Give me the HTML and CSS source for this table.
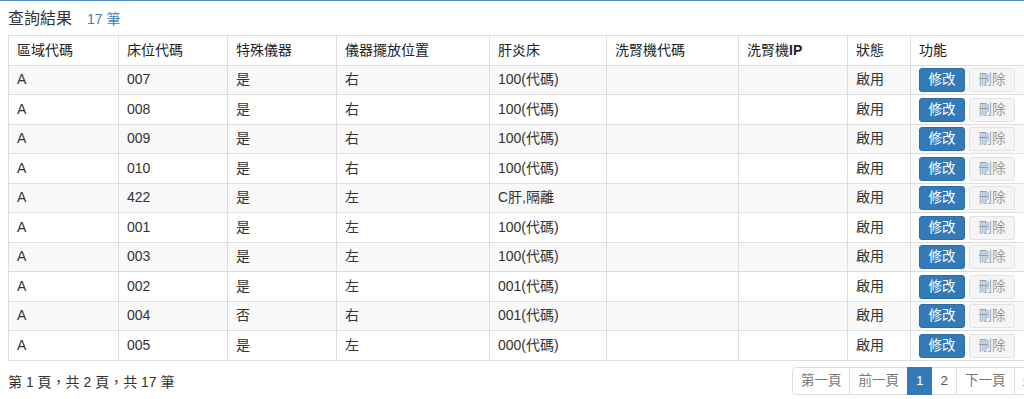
FILE: index.html
```html
<!DOCTYPE html>
<html lang="zh-Hant">
<head>
<meta charset="utf-8">
<link rel="stylesheet" href="styles.css">
</head>
<body>
<div class="page">
  <div class="title-bar">
    <span class="title">查詢結果</span><span class="count">17 筆</span>
  </div>
  <table class="grid">
    <colgroup>
      <col class="c1"><col class="c2"><col class="c3"><col class="c4"><col class="c5"><col class="c6"><col class="c7"><col class="c8"><col class="c9">
    </colgroup>
    <thead>
      <tr><th>區域代碼</th><th>床位代碼</th><th>特殊儀器</th><th>儀器擺放位置</th><th>肝炎床</th><th>洗腎機代碼</th><th>洗腎機<b>IP</b></th><th>狀態</th><th>功能</th></tr>
    </thead>
    <tbody>
      <tr><td>A</td><td>007</td><td>是</td><td>右</td><td>100(代碼)</td><td></td><td></td><td>啟用</td><td><span class="btn btn-edit">修改</span> <span class="btn btn-del">刪除</span></td></tr>
      <tr><td>A</td><td>008</td><td>是</td><td>右</td><td>100(代碼)</td><td></td><td></td><td>啟用</td><td><span class="btn btn-edit">修改</span> <span class="btn btn-del">刪除</span></td></tr>
      <tr><td>A</td><td>009</td><td>是</td><td>右</td><td>100(代碼)</td><td></td><td></td><td>啟用</td><td><span class="btn btn-edit">修改</span> <span class="btn btn-del">刪除</span></td></tr>
      <tr><td>A</td><td>010</td><td>是</td><td>右</td><td>100(代碼)</td><td></td><td></td><td>啟用</td><td><span class="btn btn-edit">修改</span> <span class="btn btn-del">刪除</span></td></tr>
      <tr><td>A</td><td>422</td><td>是</td><td>左</td><td>C肝,隔離</td><td></td><td></td><td>啟用</td><td><span class="btn btn-edit">修改</span> <span class="btn btn-del">刪除</span></td></tr>
      <tr><td>A</td><td>001</td><td>是</td><td>左</td><td>100(代碼)</td><td></td><td></td><td>啟用</td><td><span class="btn btn-edit">修改</span> <span class="btn btn-del">刪除</span></td></tr>
      <tr><td>A</td><td>003</td><td>是</td><td>左</td><td>100(代碼)</td><td></td><td></td><td>啟用</td><td><span class="btn btn-edit">修改</span> <span class="btn btn-del">刪除</span></td></tr>
      <tr><td>A</td><td>002</td><td>是</td><td>左</td><td>001(代碼)</td><td></td><td></td><td>啟用</td><td><span class="btn btn-edit">修改</span> <span class="btn btn-del">刪除</span></td></tr>
      <tr><td>A</td><td>004</td><td>否</td><td>右</td><td>001(代碼)</td><td></td><td></td><td>啟用</td><td><span class="btn btn-edit">修改</span> <span class="btn btn-del">刪除</span></td></tr>
      <tr><td>A</td><td>005</td><td>是</td><td>左</td><td>000(代碼)</td><td></td><td></td><td>啟用</td><td><span class="btn btn-edit">修改</span> <span class="btn btn-del">刪除</span></td></tr>
    </tbody>
  </table>
  <div class="footer">
    <div class="summary">第 1 頁，共 2 頁，共 17 筆</div>
    <ul class="pager">
      <li class="pg">第一頁</li>
      <li class="pg">前一頁</li>
      <li class="pg active">1</li>
      <li class="pg link">2</li>
      <li class="pg">下一頁</li>
      <li class="pg">最後頁</li>
    </ul>
  </div>
</div>
</body>
</html>
```

FILE: styles.css
```css
html, body {
  margin: 0;
  padding: 0;
  background: #fff;
  overflow: hidden;
}
body {
  font-family: "Liberation Sans", Arial, "Noto Sans CJK TC", sans-serif;
  color: #333;
  font-size: 14px;
  border-top: 1px solid #4f8abb;
}
.page {
  padding: 0 8px;
  width: 1064px;
}
.title-bar {
  padding-top: 7px;
  height: 22px;
  line-height: 22px;
  margin-bottom: 5px;
}
.title {
  font-size: 16px;
  color: #333;
}
.count {
  font-size: 14px;
  color: #3a7fb8;
  margin-left: 15px;
}
.grid {
  border-collapse: collapse;
  table-layout: fixed;
  width: 1022px;
}
.c1 { width: 110px; }
.c2 { width: 109px; }
.c3 { width: 109px; }
.c4 { width: 153px; }
.c5 { width: 117px; }
.c6 { width: 132px; }
.c7 { width: 109px; }
.c8 { width: 63px; }
.c9 { width: 120px; }
.grid th, .grid td {
  border: 1px solid #ddd;
  padding: 4.5px 8px;
  line-height: 19.5px;
  text-align: left;
  white-space: nowrap;
  overflow: hidden;
}
.grid th {
  font-weight: normal;
  color: #222;
  vertical-align: bottom;
}
.grid th b {
  font-weight: bold;
}
.grid td {
  vertical-align: middle;
}
.grid tbody tr:nth-child(odd) td {
  background: #f9f9f9;
}
.btn {
  display: inline-block;
  vertical-align: middle;
  font-size: 13.5px;
  line-height: 18px;
  padding: 2px 8.5px;
  border: 1px solid transparent;
  border-radius: 3px;
  margin: -3px 0;
}
.btn-edit {
  background: #337ab7;
  border-color: #2e6da4;
  color: #fff;
}
.btn-del {
  background: #f5f5f5;
  border-color: #e3e3e3;
  color: #9a9a9a;
}
.footer {
  display: flex;
  justify-content: space-between;
  align-items: flex-start;
  margin-top: 6px;
}
.summary {
  font-size: 14px;
  padding-top: 5px;
  line-height: 20px;
}
.pager {
  list-style: none;
  margin: 0;
  padding: 0;
  display: flex;
}
.pg {
  font-size: 13.5px;
  line-height: 18.5px;
  padding: 4px 8px;
  border: 1px solid #ddd;
  margin-left: -1px;
  color: #777;
  background: #fff;
}
.pg.link {
  color: #555;
}
.pg:first-child {
  margin-left: 0;
  border-radius: 4px 0 0 4px;
}
.pg.active {
  background: #337ab7;
  border-color: #337ab7;
  color: #fff;
  position: relative;
}
```
